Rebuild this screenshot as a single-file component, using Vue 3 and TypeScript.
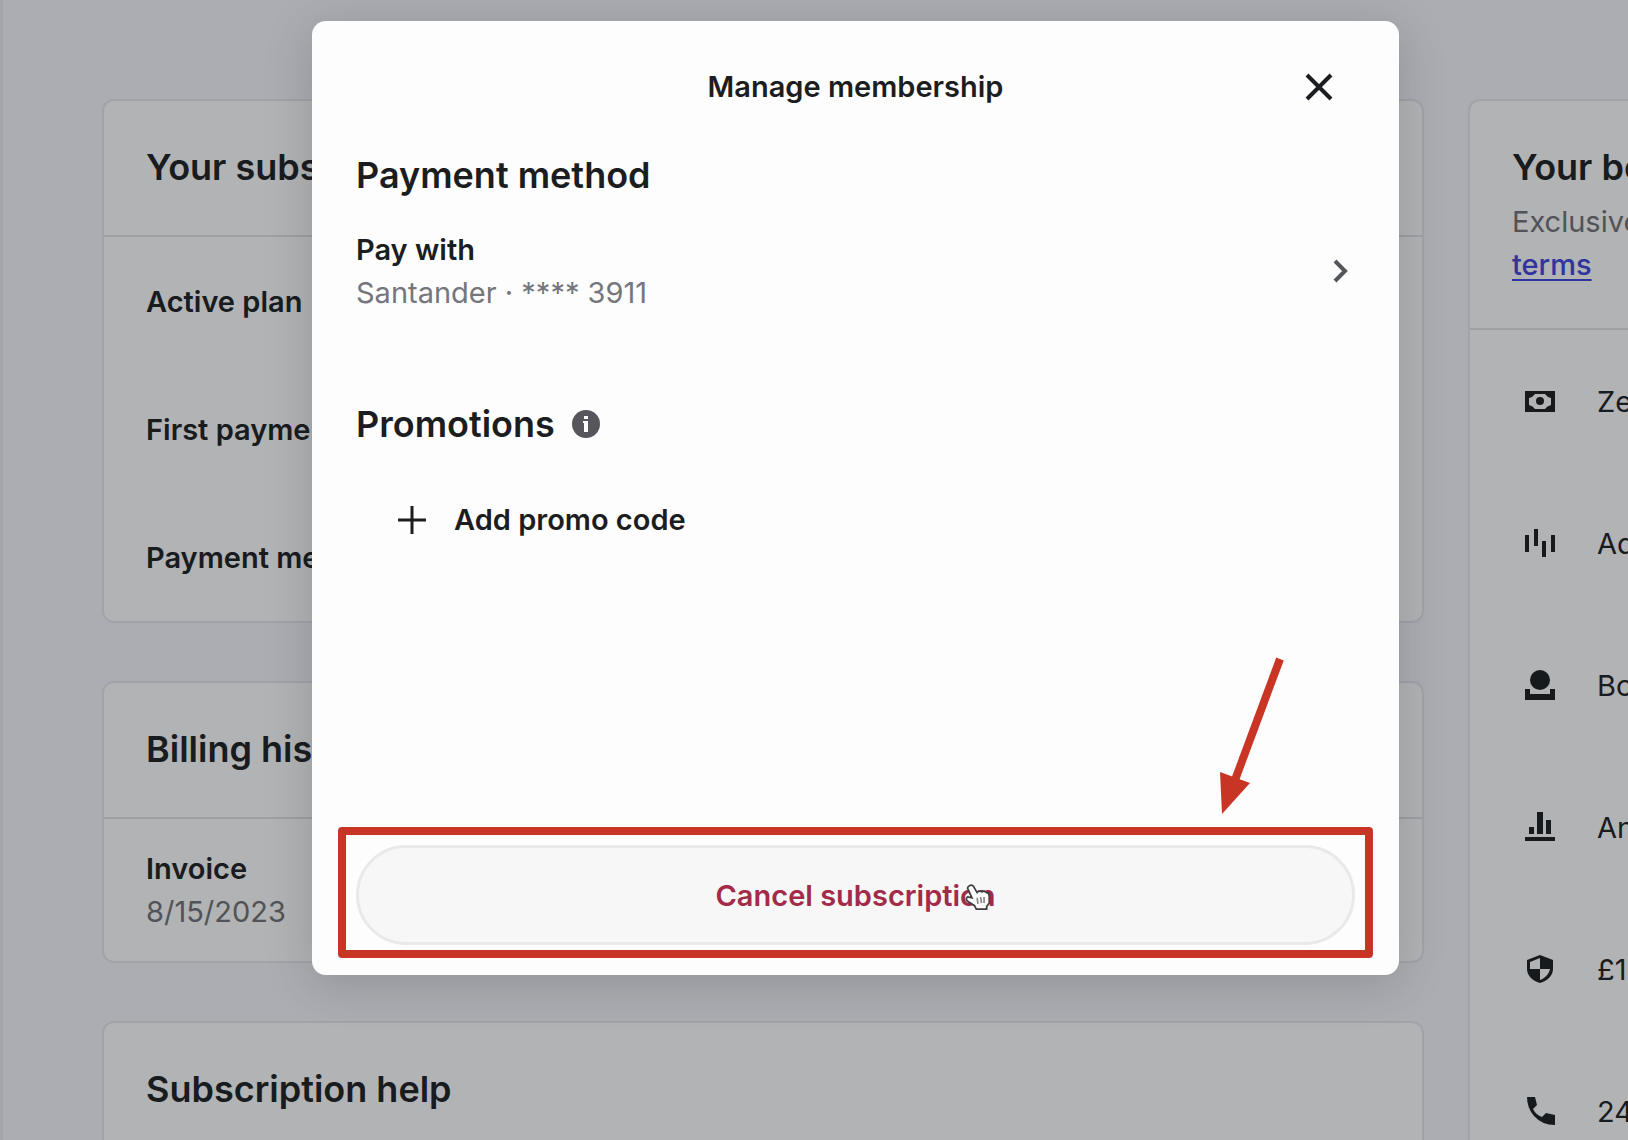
<script setup lang="ts">
interface Benefit {
  icon: 'cash' | 'bars' | 'person' | 'chart' | 'shield' | 'phone'
  label: string
}

const planRows: string[] = ['Active plan', 'First payment', 'Payment method']

const benefits: Benefit[] = [
  { icon: 'cash', label: 'Ze' },
  { icon: 'bars', label: 'Ad' },
  { icon: 'person', label: 'Bo' },
  { icon: 'chart', label: 'An' },
  { icon: 'shield', label: '£1' },
  { icon: 'phone', label: '24' },
]
</script>

<template>
  <div class="page">
    <div class="content">
      <main class="main">
        <section class="card">
          <header class="card-head"><h2>Your subscription</h2></header>
          <div v-for="row in planRows" :key="row" class="plan-row">{{ row }}</div>
        </section>

        <section class="card">
          <header class="card-head"><h2>Billing history</h2></header>
          <div class="invoice">
            <strong>Invoice</strong>
            <span class="muted">8/15/2023</span>
          </div>
        </section>

        <section class="card">
          <header class="card-head"><h2>Subscription help</h2></header>
        </section>
      </main>

      <aside class="card side">
        <header class="side-head">
          <h2>Your be</h2>
          <p class="muted">Exclusive</p>
          <p><a href="#terms">terms</a></p>
        </header>
        <ul class="benefits">
          <li v-for="item in benefits" :key="item.icon">
            <svg class="icon" viewBox="0 0 30 30" aria-hidden="true">
              <template v-if="item.icon === 'cash'">
                <path fill-rule="evenodd" d="M0 5h30v21H0zM10 8Q8 11 4 12v7q4 1 6 4h10q2-3 6-4v-7q-4-1-6-4z" />
                <circle cx="15" cy="15" r="4" />
              </template>
              <path v-else-if="item.icon === 'bars'" d="M0 7h4v17H0zM9 1h4v17H9zM17 13h4v16h-4zM26 7h4v17h-4z" />
              <template v-else-if="item.icon === 'person'">
                <circle cx="15" cy="10" r="10" />
                <path d="M0 19h5v5h20v-5h5v11H0z" />
              </template>
              <path v-else-if="item.icon === 'chart'" d="M4 15h5v7H4zM12 0h6v22h-6zM21 8h5v14h-5zM0 25h30v4H0z" />
              <path
                v-else-if="item.icon === 'shield'"
                fill-rule="evenodd"
                d="M15 1l13 5v9c0 6-5 12-13 14C7 27 2 21 2 15V6zM15 4L5 8v7h10zM15 15v11c5-2 9-6 10-11z"
              />
              <path v-else d="M2 1h8l2 8-4 4q3 6 9 8l4-4 9 2v10Q17 29 9 20 2 12 2 1z" />
            </svg>
            <span>{{ item.label }}</span>
          </li>
        </ul>
      </aside>
    </div>

    <div class="overlay">
      <div class="modal" role="dialog" aria-modal="true" aria-labelledby="modal-title">
        <header class="modal-head">
          <h1 id="modal-title">Manage membership</h1>
          <button class="close" type="button" aria-label="Close">
            <svg viewBox="0 0 28 28" width="28" height="28"><path d="M2 2l24 24M26 2L2 26" /></svg>
          </button>
        </header>

        <h2>Payment method</h2>
        <button class="pay" type="button">
          <span class="pay-text">
            <strong>Pay with</strong>
            <span class="muted">Santander · **** 3911</span>
          </span>
          <svg viewBox="0 0 28 28" width="28" height="28"><path d="M8 4l10 10L8 24" /></svg>
        </button>

        <h2 class="promo-title">
          Promotions
          <svg viewBox="0 0 30 30" width="30" height="30" aria-hidden="true">
            <circle cx="15" cy="15" r="14" fill="#56565c" />
            <path d="M13 7h4v3h-4zM12 12h5v11h-4v-9h-1z" fill="#fdfdfd" />
          </svg>
        </h2>
        <button class="add" type="button">
          <svg viewBox="0 0 28 28" width="28" height="28"><path d="M14 0v28M0 14h28" /></svg>
          Add promo code
        </button>

        <footer class="modal-foot">
          <button class="cancel" type="button">Cancel subscription</button>
          <div class="highlight"></div>
          <svg class="arrow" viewBox="0 0 64 160" width="64" height="160" aria-hidden="true">
            <path d="M60 3L15 124" stroke="#c93524" stroke-width="8" />
            <path d="M0 116l30 11L2 158z" fill="#c93524" />
          </svg>
          <svg class="cursor" viewBox="0 0 30 32" width="26" height="30" aria-hidden="true">
            <path d="M5 3q3-2 5 1l4 7 2-2 4 1 2-1 3 2q3 0 3 4v8l-3 4v3H13l-2-4-8-5q-3-3 0-5l5 1-5-11q0-2 2-3z" />
            <path class="fingers" d="M14 17l1 7M18 16l1 7M22 16v7" />
          </svg>
        </footer>
      </div>
    </div>
  </div>
</template>

<style>
body {
  margin: 0;
}
</style>

<style scoped>
* {
  box-sizing: border-box;
}

.page {
  position: relative;
  height: 100vh;
  overflow: hidden;
  background: #f5f6fd;
  box-shadow: inset 3px 0 #eaebf0;
  color: #25272a;
  font: 500 29px/43px Inter, "Noto Sans", sans-serif;
}

h1,
h2,
p,
ul {
  margin: 0;
  padding: 0;
}

h2 {
  font-size: 36px;
  line-height: 44px;
  font-weight: 600;
}

strong {
  font-weight: 600;
}

.muted {
  color: #75767c;
  font-weight: 400;
}

.content {
  display: flex;
  align-items: flex-start;
  gap: 44px;
  padding: 99px 0 0 102px;
}

.main {
  flex: 1;
  display: flex;
  flex-direction: column;
  gap: 58px;
  min-width: 0;
}

.card {
  background: #feffff;
  border: 2px solid #e8e9ef;
  border-radius: 12px;
}

.card-head {
  padding: 44px 42px 46px;
  border-bottom: 2px solid #e3e4e8;
}

.plan-row {
  display: flex;
  align-items: center;
  height: 128px;
  padding: 0 42px;
  font-weight: 600;
}

.invoice {
  display: flex;
  flex-direction: column;
  padding: 28px 42px;
}

.side {
  flex: 0 0 500px;
  margin-right: -340px;
}

.side-head {
  padding: 44px 42px 42px;
  border-bottom: 2px solid #e3e4e8;
}

.side-head h2 {
  margin-bottom: 11px;
}

.side-head a {
  color: #4549e0;
  text-underline-offset: 4px;
  text-decoration-thickness: 2px;
}

.benefits {
  list-style: none;
}

.benefits li {
  display: flex;
  align-items: center;
  gap: 42px;
  height: 142px;
  padding-left: 55px;
  font-weight: 400;
}

.icon {
  width: 30px;
  height: 30px;
  fill: #222427;
}

.overlay {
  position: absolute;
  inset: 0;
  display: flex;
  align-items: flex-start;
  padding: 21px 229px 0 312px;
  background: rgba(0, 3, 8, 0.3);
}

.modal {
  flex: 1;
  display: flex;
  flex-direction: column;
  padding: 44px 44px 30px;
  border-radius: 14px;
  background: #fdfdfd;
  box-shadow: 0 8px 48px rgba(20, 24, 32, 0.18);
  color: #1c1d20;
}

button {
  padding: 0;
  border: 0;
  background: none;
  color: inherit;
  font: inherit;
  text-align: left;
  cursor: pointer;
}

button svg {
  fill: none;
  stroke: #1c1d20;
  stroke-width: 3;
}

.modal-head {
  display: grid;
  grid-template-columns: 58px 1fr 58px;
  align-items: center;
  margin-bottom: 44px;
}

h1 {
  grid-column: 2;
  font-size: 29px;
  line-height: 44px;
  font-weight: 600;
  text-align: center;
}

.close {
  display: flex;
  align-items: center;
  justify-content: center;
  width: 44px;
  height: 44px;
}

.close svg,
.pay svg {
  stroke-width: 4;
}

.pay {
  display: flex;
  align-items: center;
  justify-content: space-between;
  margin-top: 31px;
}

.pay svg {
  stroke: #55565b;
}

.pay-text {
  display: flex;
  flex-direction: column;
}

.promo-title {
  display: flex;
  align-items: center;
  gap: 16px;
  margin-top: 88px;
}

.add {
  display: flex;
  align-items: center;
  align-self: flex-start;
  gap: 28px;
  margin: 52px 0 0 42px;
  line-height: 44px;
  font-weight: 600;
}

.modal-foot {
  position: relative;
  display: flex;
  margin-top: 303px;
}

.cancel {
  flex: 1;
  height: 100px;
  border: 3px solid #e9e9ea;
  border-radius: 50px;
  background: #f7f7f7;
  color: #a32b49;
  font-weight: 600;
  text-align: center;
}

.highlight {
  position: absolute;
  inset: -18px -18px -13px;
  border: 8px solid #c93524;
  border-radius: 4px;
  pointer-events: none;
}

.arrow {
  position: absolute;
  right: 71px;
  bottom: 129px;
}

.cursor {
  position: absolute;
  top: 37px;
  left: calc(50% + 109px);
  fill: #fafafa;
  stroke: #3c3f3c;
  stroke-width: 2;
  pointer-events: none;
}

.fingers {
  stroke: #8a8c8a;
}
</style>
